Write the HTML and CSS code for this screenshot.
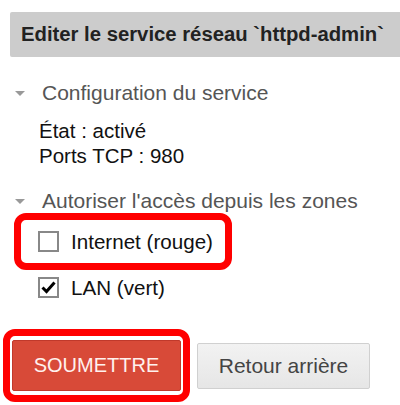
FILE: index.html
```html
<!DOCTYPE html>
<html lang="fr">
<head>
    <meta charset="UTF-8">
    <meta name="viewport" content="width=device-width, initial-scale=1.0">
    <title>Editer le service réseau</title>
    <link rel="stylesheet" href="styles.css">
</head>
<body>

<div class="panel">
    <h2 class="title">Editer le service réseau `httpd-admin`</h2>

    <div class="section">
        <div class="section-head"><span class="caret"></span>Configuration du service</div>
        <div class="section-body">
            <p>État : activé</p>
            <p>Ports TCP : 980</p>
        </div>
    </div>

    <div class="section">
        <div class="section-head second"><span class="caret"></span>Autoriser l'accès depuis les zones</div>
        <div class="zones">
            <label class="zone highlight">
                <span class="box"></span>
                Internet (rouge)
            </label>
            <label class="zone">
                <span class="box">
                    <svg width="17" height="17" viewBox="0 0 17 17"><path d="M2.5 8.5 L6.5 12.5 L14.5 3.5" fill="none" stroke="#000" stroke-width="3"/></svg>
                </span>
                LAN (vert)
            </label>
        </div>
    </div>

    <div class="actions">
        <div class="highlight btn-wrap">
            <button class="btn btn-primary" type="submit">SOUMETTRE</button>
        </div>
        <button class="btn btn-default" type="button">Retour arrière</button>
    </div>
</div>

</body>
</html>
```

FILE: styles.css
```css
body {
    font-family: "Liberation Sans", Arial, sans-serif;
    background-color: #fff;
    margin: 0;
    padding: 0;
    color: #111;
}
.panel {
    padding-top: 12px;
}
.title {
    margin: 0 0 0 10px;
    height: 45px;
    line-height: 45px;
    padding-left: 11px;
    background-color: #cccccc;
    border-radius: 2px 0 0 2px;
    font-size: 20.3px;
    font-weight: bold;
    color: #222;
    white-space: nowrap;
}
.section-head {
    display: flex;
    align-items: center;
    gap: 17px;
    margin: 24px 0 0 15px;
    height: 24px;
    font-size: 21px;
    color: #555;
    white-space: nowrap;
}
.section-head.second {
    margin-top: 21px;
}
.caret {
    width: 0;
    height: 0;
    border-left: 5px solid transparent;
    border-right: 5px solid transparent;
    border-top: 5px solid #999;
}
.section-body {
    padding: 13px 0 0 39px;
}
.section-body p {
    margin: 0;
    font-size: 20.5px;
    line-height: 25px;
}
.zones {
    display: flex;
    flex-direction: column;
}
.zone {
    display: flex;
    align-items: center;
    gap: 12px;
    height: 35px;
    padding-left: 38px;
    font-size: 20.6px;
}
.box {
    width: 21px;
    height: 21px;
    box-sizing: border-box;
    border: 2px solid #888;
    background-color: #fff;
    display: flex;
    align-items: center;
    justify-content: center;
}
.highlight {
    border: 7px solid #ff0000;
    border-radius: 12px;
    box-sizing: border-box;
}
.zone.highlight {
    margin-left: 14px;
    width: 218px;
    height: 57px;
    padding-left: 17px;
}
.actions {
    display: flex;
    align-items: center;
    gap: 7px;
    margin: 24px 0 0 3px;
}
.btn-wrap {
    padding: 4px 2px;
}
.btn {
    font-family: "Liberation Sans", Arial, sans-serif;
    border-radius: 2px;
    cursor: pointer;
}
.btn-primary {
    width: 169px;
    height: 51px;
    font-size: 20px;
    background-color: #d84a38;
    border: 1px solid #c0392b;
    color: #fff1ee;
}
.btn-default {
    width: 173px;
    height: 46px;
    font-size: 21px;
    background: linear-gradient(#f2f2f2, #e6e6e6);
    border: 1px solid #d0d0d0;
    color: #444;
}
```
